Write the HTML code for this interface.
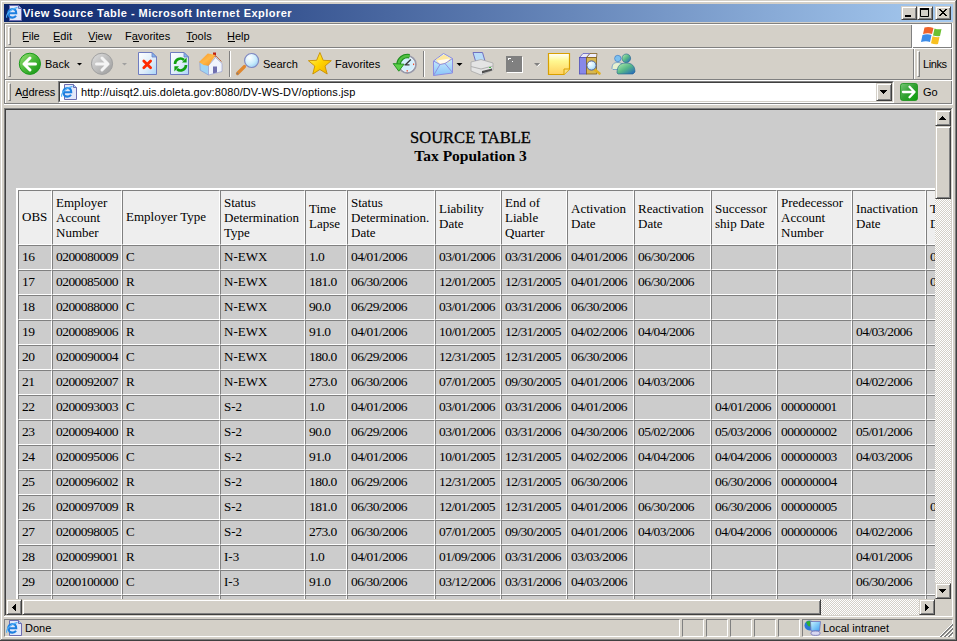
<!DOCTYPE html>
<html><head><meta charset="utf-8"><style>
*{box-sizing:border-box;margin:0;padding:0}
html,body{width:957px;height:641px;overflow:hidden;background:#d4d0c8;font-family:"Liberation Sans",sans-serif;font-size:11px;color:#000}
.a{position:absolute}
.hl{background:#fff}
.sh{background:#808080}
.dk{background:#404040}
.t{position:absolute;white-space:nowrap;line-height:12px;font-size:11px}
u{text-decoration:none;border-bottom:1px solid #000}
.grip{position:absolute;width:3px;border-left:1px solid #fff;border-top:1px solid #fff;border-right:1px solid #808080;border-bottom:1px solid #808080}
.btn{position:absolute;background:#d4d0c8;border-top:1px solid #d4d0c8;border-left:1px solid #d4d0c8;border-right:1px solid #404040;border-bottom:1px solid #404040;box-shadow:inset 1px 1px 0 #fff,inset -1px -1px 0 #808080}
.track{background-color:#ebe9e4;background-image:conic-gradient(#fff 25%,#d4d0c8 0 50%,#fff 0 75%,#d4d0c8 0);background-size:2px 2px}

#page{font-family:"Liberation Serif",serif}
#h1{position:absolute;left:0;width:929px;text-align:center;top:20px;font-size:16.5px;line-height:16px;white-space:nowrap;-webkit-text-stroke:0.3px #000}
#h2{position:absolute;left:0;width:929px;text-align:center;top:38px;font-size:15.5px;line-height:15px;font-weight:bold;white-space:nowrap}
#tb{position:absolute;left:10px;top:78px;border-collapse:separate;border-spacing:0;table-layout:fixed;border-top:2px solid #fff;border-left:2px solid #fff;font-size:13px;line-height:15px}
#tb th,#tb td{border-top:1px solid #808080;border-left:1px solid #808080;border-right:1px solid #fff;border-bottom:1px solid #fff;padding:0 0 0 3px;text-align:left;font-weight:normal;vertical-align:middle;white-space:nowrap;overflow:hidden}
#tb th{background:#eeeeee;height:55px;vertical-align:top;padding-top:18px}
#tb th.l2{padding-top:10px}
#tb th.l3{padding-top:3.5px}
#tb td{height:25px;padding-bottom:2px}
#tb td.n{letter-spacing:-0.55px;font-size:13.5px}
</style></head><body>
<!-- window frame -->
<div class="a hl" style="left:1px;top:1px;width:955px;height:1px"></div>
<div class="a hl" style="left:1px;top:1px;width:1px;height:639px"></div>
<div class="a sh" style="left:955px;top:1px;width:1px;height:639px"></div>
<div class="a sh" style="left:1px;top:639px;width:955px;height:1px"></div>
<div class="a dk" style="left:956px;top:0;width:1px;height:641px"></div>
<div class="a dk" style="left:0;top:640px;width:957px;height:1px"></div>

<!-- title bar -->
<div class="a" style="left:4px;top:4px;width:949px;height:18px;background:linear-gradient(to right,#0a246a,#a6caf0)"></div>
<div class="t" style="left:23px;top:7px;color:#fff;font-weight:bold;letter-spacing:0.48px">View Source Table - Microsoft Internet Explorer</div>
<div class="btn" style="left:901px;top:6px;width:16px;height:14px"></div>
<div class="btn" style="left:917px;top:6px;width:16px;height:14px"></div>
<div class="btn" style="left:935px;top:6px;width:16px;height:14px"></div>

<!-- rebar etched frame -->
<div class="a dk" style="left:4px;top:23px;width:948px;height:1px;background:#808080"></div>
<div class="a hl" style="left:5px;top:24px;width:947px;height:1px"></div>
<div class="a" style="left:4px;top:23px;width:1px;height:81px;background:#808080"></div>
<div class="a hl" style="left:5px;top:24px;width:1px;height:80px"></div>
<div class="a" style="left:951px;top:23px;width:1px;height:81px;background:#808080"></div>
<div class="a hl" style="left:952px;top:23px;width:1px;height:82px"></div>
<div class="a" style="left:4px;top:47px;width:948px;height:1px;background:#808080"></div>
<div class="a hl" style="left:5px;top:48px;width:947px;height:1px"></div>
<div class="a" style="left:4px;top:79px;width:948px;height:1px;background:#808080"></div>
<div class="a hl" style="left:5px;top:80px;width:947px;height:1px"></div>
<div class="a" style="left:4px;top:103px;width:948px;height:1px;background:#808080"></div>
<div class="a hl" style="left:4px;top:104px;width:949px;height:1px"></div>

<!-- menu band -->
<div class="grip" style="left:8px;top:27px;height:18px"></div>
<div class="t" style="left:22px;top:30px">File</div>
<div class="t" style="left:53px;top:30px">Edit</div>
<div class="t" style="left:88px;top:30px">View</div>
<div class="t" style="left:125px;top:30px">Favorites</div>
<div class="t" style="left:186px;top:30px">Tools</div>
<div class="t" style="left:227px;top:30px">Help</div>
<div class="a" style="left:911px;top:25px;width:1px;height:22px;background:#808080"></div>
<div class="a hl" style="left:912px;top:47px;width:1px;height:1px"></div>
<div class="a hl" style="left:912px;top:25px;width:39px;height:22px"></div>

<!-- toolbar band -->
<div class="grip" style="left:8px;top:51px;height:26px"></div>
<div class="t" style="left:45px;top:58px">Back</div>
<div class="t" style="left:263px;top:58px">Search</div>
<div class="t" style="left:335px;top:58px">Favorites</div>
<div class="a" style="left:229px;top:51px;width:1px;height:26px;background:#808080"></div>
<div class="a hl" style="left:230px;top:51px;width:1px;height:26px"></div>
<div class="a" style="left:423px;top:51px;width:1px;height:26px;background:#808080"></div>
<div class="a hl" style="left:424px;top:51px;width:1px;height:26px"></div>
<div class="a" style="left:913px;top:49px;width:1px;height:30px;background:#808080"></div>
<div class="a hl" style="left:914px;top:49px;width:1px;height:30px"></div>
<div class="grip" style="left:917px;top:51px;height:26px"></div>
<div class="t" style="left:923px;top:58px;letter-spacing:-0.4px">Links</div>

<!-- address band -->
<div class="grip" style="left:8px;top:83px;height:18px"></div>
<div class="t" style="left:15px;top:86px">Address</div>
<div class="a" style="left:58px;top:81px;width:836px;height:22px;border-top:1px solid #808080;border-left:1px solid #808080;border-right:1px solid #fff;border-bottom:1px solid #fff"></div>
<div class="a" style="left:59px;top:82px;width:834px;height:20px;border-top:1px solid #404040;border-left:1px solid #404040;border-right:1px solid #d4d0c8;border-bottom:1px solid #d4d0c8;background:#fff"></div>
<div class="t" style="left:81px;top:86px;letter-spacing:0.1px">http://uisqt2.uis.doleta.gov:8080/DV-WS-DV/options.jsp</div>
<div class="btn" style="left:876px;top:83px;width:16px;height:18px"></div>
<div class="t" style="left:923px;top:86px">Go</div>

<!-- content frame -->
<div class="a" style="left:4px;top:108px;width:948px;height:1px;background:#808080"></div>
<div class="a" style="left:4px;top:108px;width:1px;height:508px;background:#808080"></div>
<div class="a dk" style="left:5px;top:109px;width:946px;height:1px"></div>
<div class="a dk" style="left:5px;top:109px;width:1px;height:506px"></div>
<div class="a hl" style="left:952px;top:108px;width:1px;height:508px"></div>
<div class="a hl" style="left:4px;top:616px;width:949px;height:1px"></div>

<!-- page -->
<div class="a" id="page" style="left:6px;top:110px;width:929px;height:489px;background:#cccccc;overflow:hidden">
<div id="h1">SOURCE TABLE</div>
<div id="h2">Tax Population 3</div>
<table id="tb" style="width:984px">
<colgroup><col style="width:34px"><col style="width:70px"><col style="width:98px"><col style="width:85px"><col style="width:42px"><col style="width:88px"><col style="width:66px"><col style="width:66px"><col style="width:67px"><col style="width:77px"><col style="width:66px"><col style="width:75px"><col style="width:74px"><col style="width:74px"></colgroup>
<tr class="hr"><th>OBS</th><th class="l3">Employer<br>Account<br>Number</th><th>Employer Type</th><th class="l3">Status<br>Determination<br>Type</th><th class="l2">Time<br>Lapse</th><th class="l3">Status<br>Determination.<br>Date</th><th class="l2">Liability<br>Date</th><th class="l3">End of<br>Liable<br>Quarter</th><th class="l2">Activation<br>Date</th><th class="l2">Reactivation<br>Date</th><th class="l2">Successor<br>ship Date</th><th class="l3">Predecessor<br>Account<br>Number</th><th class="l2">Inactivation<br>Date</th><th class="l2">Termination<br>Date</th></tr>
<tr><td class="n">16</td><td class="n">0200080009</td><td>C</td><td>N-EWX</td><td class="n">1.0</td><td class="n">04/01/2006</td><td class="n">03/01/2006</td><td class="n">03/31/2006</td><td class="n">04/01/2006</td><td class="n">06/30/2006</td><td>&nbsp;</td><td>&nbsp;</td><td>&nbsp;</td><td class="n">0</td></tr>
<tr><td class="n">17</td><td class="n">0200085000</td><td>R</td><td>N-EWX</td><td class="n">181.0</td><td class="n">06/30/2006</td><td class="n">12/01/2005</td><td class="n">12/31/2005</td><td class="n">04/01/2006</td><td class="n">06/30/2006</td><td>&nbsp;</td><td>&nbsp;</td><td>&nbsp;</td><td class="n">0</td></tr>
<tr><td class="n">18</td><td class="n">0200088000</td><td>C</td><td>N-EWX</td><td class="n">90.0</td><td class="n">06/29/2006</td><td class="n">03/01/2006</td><td class="n">03/31/2006</td><td class="n">06/30/2006</td><td>&nbsp;</td><td>&nbsp;</td><td>&nbsp;</td><td>&nbsp;</td><td>&nbsp;</td></tr>
<tr><td class="n">19</td><td class="n">0200089006</td><td>R</td><td>N-EWX</td><td class="n">91.0</td><td class="n">04/01/2006</td><td class="n">10/01/2005</td><td class="n">12/31/2005</td><td class="n">04/02/2006</td><td class="n">04/04/2006</td><td>&nbsp;</td><td>&nbsp;</td><td class="n">04/03/2006</td><td>&nbsp;</td></tr>
<tr><td class="n">20</td><td class="n">0200090004</td><td>C</td><td>N-EWX</td><td class="n">180.0</td><td class="n">06/29/2006</td><td class="n">12/31/2005</td><td class="n">12/31/2005</td><td class="n">06/30/2006</td><td>&nbsp;</td><td>&nbsp;</td><td>&nbsp;</td><td>&nbsp;</td><td>&nbsp;</td></tr>
<tr><td class="n">21</td><td class="n">0200092007</td><td>R</td><td>N-EWX</td><td class="n">273.0</td><td class="n">06/30/2006</td><td class="n">07/01/2005</td><td class="n">09/30/2005</td><td class="n">04/01/2006</td><td class="n">04/03/2006</td><td>&nbsp;</td><td>&nbsp;</td><td class="n">04/02/2006</td><td>&nbsp;</td></tr>
<tr><td class="n">22</td><td class="n">0200093003</td><td>C</td><td>S-2</td><td class="n">1.0</td><td class="n">04/01/2006</td><td class="n">03/01/2006</td><td class="n">03/31/2006</td><td class="n">04/01/2006</td><td>&nbsp;</td><td class="n">04/01/2006</td><td class="n">000000001</td><td>&nbsp;</td><td>&nbsp;</td></tr>
<tr><td class="n">23</td><td class="n">0200094000</td><td>R</td><td>S-2</td><td class="n">90.0</td><td class="n">06/29/2006</td><td class="n">03/01/2006</td><td class="n">03/31/2006</td><td class="n">04/30/2006</td><td class="n">05/02/2006</td><td class="n">05/03/2006</td><td class="n">000000002</td><td class="n">05/01/2006</td><td>&nbsp;</td></tr>
<tr><td class="n">24</td><td class="n">0200095006</td><td>C</td><td>S-2</td><td class="n">91.0</td><td class="n">04/01/2006</td><td class="n">10/01/2005</td><td class="n">12/31/2005</td><td class="n">04/02/2006</td><td class="n">04/04/2006</td><td class="n">04/04/2006</td><td class="n">000000003</td><td class="n">04/03/2006</td><td>&nbsp;</td></tr>
<tr><td class="n">25</td><td class="n">0200096002</td><td>R</td><td>S-2</td><td class="n">180.0</td><td class="n">06/29/2006</td><td class="n">12/31/2005</td><td class="n">12/31/2005</td><td class="n">06/30/2006</td><td>&nbsp;</td><td class="n">06/30/2006</td><td class="n">000000004</td><td>&nbsp;</td><td>&nbsp;</td></tr>
<tr><td class="n">26</td><td class="n">0200097009</td><td>R</td><td>S-2</td><td class="n">181.0</td><td class="n">06/30/2006</td><td class="n">12/01/2005</td><td class="n">12/31/2005</td><td class="n">04/01/2006</td><td class="n">06/30/2006</td><td class="n">06/30/2006</td><td class="n">000000005</td><td>&nbsp;</td><td class="n">0</td></tr>
<tr><td class="n">27</td><td class="n">0200098005</td><td>C</td><td>S-2</td><td class="n">273.0</td><td class="n">06/30/2006</td><td class="n">07/01/2005</td><td class="n">09/30/2005</td><td class="n">04/01/2006</td><td class="n">04/03/2006</td><td class="n">04/04/2006</td><td class="n">000000006</td><td class="n">04/02/2006</td><td>&nbsp;</td></tr>
<tr><td class="n">28</td><td class="n">0200099001</td><td>R</td><td>I-3</td><td class="n">1.0</td><td class="n">04/01/2006</td><td class="n">01/09/2006</td><td class="n">03/31/2006</td><td class="n">03/03/2006</td><td>&nbsp;</td><td>&nbsp;</td><td>&nbsp;</td><td class="n">04/01/2006</td><td>&nbsp;</td></tr>
<tr><td class="n">29</td><td class="n">0200100000</td><td>C</td><td>I-3</td><td class="n">91.0</td><td class="n">06/30/2006</td><td class="n">03/12/2006</td><td class="n">03/31/2006</td><td class="n">04/03/2006</td><td>&nbsp;</td><td>&nbsp;</td><td>&nbsp;</td><td class="n">06/30/2006</td><td>&nbsp;</td></tr>
<tr><td class="n">30</td><td class="n">0200101000</td><td>R</td><td>I-3</td><td class="n">1.0</td><td class="n">04/01/2006</td><td class="n">01/09/2006</td><td class="n">03/31/2006</td><td class="n">03/03/2006</td><td>&nbsp;</td><td>&nbsp;</td><td>&nbsp;</td><td>&nbsp;</td><td>&nbsp;</td></tr>
</table>
</div>

<!-- scrollbars -->
<div class="a track" style="left:935px;top:110px;width:16px;height:489px"></div>
<div class="btn" style="left:935px;top:110px;width:16px;height:16px"></div>
<div class="btn" style="left:935px;top:126px;width:16px;height:73px"></div>
<div class="btn" style="left:935px;top:583px;width:16px;height:16px"></div>
<div class="a track" style="left:6px;top:599px;width:929px;height:16px"></div>
<div class="btn" style="left:6px;top:599px;width:16px;height:16px"></div>
<div class="btn" style="left:22px;top:599px;width:799px;height:16px"></div>
<div class="btn" style="left:919px;top:599px;width:16px;height:16px"></div>
<div class="a" style="left:935px;top:599px;width:16px;height:16px;background:#d4d0c8"></div>

<!-- status bar -->
<div class="a" style="left:4px;top:619px;width:676px;height:18px;border-top:1px solid #808080;border-left:1px solid #808080;border-right:1px solid #fff;border-bottom:1px solid #fff"></div>
<div class="t" style="left:25px;top:622px">Done</div>
<!-- status panels -->
<div class="a" style="left:682px;top:619px;width:22px;height:18px;border-top:1px solid #808080;border-left:1px solid #808080;border-right:1px solid #fff;border-bottom:1px solid #fff"></div>
<div class="a" style="left:706px;top:619px;width:22px;height:18px;border-top:1px solid #808080;border-left:1px solid #808080;border-right:1px solid #fff;border-bottom:1px solid #fff"></div>
<div class="a" style="left:730px;top:619px;width:22px;height:18px;border-top:1px solid #808080;border-left:1px solid #808080;border-right:1px solid #fff;border-bottom:1px solid #fff"></div>
<div class="a" style="left:754px;top:619px;width:22px;height:18px;border-top:1px solid #808080;border-left:1px solid #808080;border-right:1px solid #fff;border-bottom:1px solid #fff"></div>
<div class="a" style="left:778px;top:619px;width:22px;height:18px;border-top:1px solid #808080;border-left:1px solid #808080;border-right:1px solid #fff;border-bottom:1px solid #fff"></div>
<div class="a" style="left:802px;top:619px;width:151px;height:18px;border-top:1px solid #808080;border-left:1px solid #808080;border-right:1px solid #fff;border-bottom:1px solid #fff"></div>
<div class="t" style="left:823px;top:622px">Local intranet</div>

<svg class="a" style="left:0;top:0" width="957" height="641" viewBox="0 0 957 641">
<defs>
<linearGradient id="gB" x1="0" y1="0" x2="1" y2="1"><stop offset="0" stop-color="#9ee27a"/><stop offset="0.5" stop-color="#48b838"/><stop offset="1" stop-color="#109010"/></linearGradient>
<linearGradient id="gF" x1="0" y1="0" x2="1" y2="1"><stop offset="0" stop-color="#e0e0e0"/><stop offset="1" stop-color="#9a9a9a"/></linearGradient>
<linearGradient id="gDoc" x1="0" y1="0" x2="1" y2="1"><stop offset="0" stop-color="#ffffff"/><stop offset="0.6" stop-color="#dcecfa"/><stop offset="1" stop-color="#a8d4f8"/></linearGradient>
<linearGradient id="gRoof" x1="0" y1="0" x2="1" y2="1"><stop offset="0" stop-color="#f89020"/><stop offset="0.5" stop-color="#ffb848"/><stop offset="1" stop-color="#f08818"/></linearGradient>
<radialGradient id="gLens" cx="0.35" cy="0.3" r="0.8"><stop offset="0" stop-color="#ffffff"/><stop offset="0.6" stop-color="#c8ecfc"/><stop offset="1" stop-color="#90c8f0"/></radialGradient>
<linearGradient id="gStar" x1="0" y1="0" x2="1" y2="1"><stop offset="0" stop-color="#fff27a"/><stop offset="0.5" stop-color="#ffd400"/><stop offset="1" stop-color="#f0a800"/></linearGradient>
<linearGradient id="gNote" x1="0" y1="0" x2="0" y2="1"><stop offset="0" stop-color="#ffffff"/><stop offset="0.35" stop-color="#fff890"/><stop offset="1" stop-color="#ffd060"/></linearGradient>
<linearGradient id="gEnv" x1="0" y1="0" x2="0" y2="1"><stop offset="0" stop-color="#e0f8ff"/><stop offset="1" stop-color="#88c4f8"/></linearGradient>
<linearGradient id="gGo" x1="0" y1="0" x2="1" y2="1"><stop offset="0" stop-color="#78c878"/><stop offset="0.5" stop-color="#30a030"/><stop offset="1" stop-color="#08a008"/></linearGradient>
<linearGradient id="gMsn" x1="0" y1="0" x2="1" y2="1"><stop offset="0" stop-color="#b8f0b0"/><stop offset="0.5" stop-color="#58b888"/><stop offset="1" stop-color="#2060c0"/></linearGradient>
<linearGradient id="gPc" x1="0" y1="0" x2="1" y2="1"><stop offset="0" stop-color="#c8f4ff"/><stop offset="1" stop-color="#3ca0f0"/></linearGradient>

</defs>

<!-- title icon -->
<g transform="translate(6 5)">
 <path d="M3.5 0.5H12.5L15.5 3.5V15.5H3.5Z" fill="#e2e8fa" stroke="#6c6cb0"/>
 <path d="M12.5 0.5V3.5H15.5" fill="#a8d0f8" stroke="#6c6cb0"/>
 <path d="M2.8 8.2H10.2C10.2 5.6 8.6 4 6.4 4C4 4 2.2 5.9 2.2 8.3C2.2 10.8 4 12.6 6.5 12.6C8.2 12.6 9.3 11.9 10 10.8" fill="none" stroke="#1e80e0" stroke-width="2.1"/>
 <path d="M0.8 12.8C-0.4 9.6 4 4.2 11.5 2.4" fill="none" stroke="#50b0f8" stroke-width="1.1"/>
</g>

<!-- title buttons glyphs -->
<rect x="905" y="15" width="6" height="2" fill="#000"/>
<path d="M920.5 8.5h8v8h-8z" fill="none" stroke="#000"/><rect x="920" y="8" width="9" height="2" fill="#000"/>
<g fill="#000"><rect x="939" y="9" width="2" height="1"/><rect x="945" y="9" width="2" height="1"/><rect x="940" y="10" width="2" height="1"/><rect x="944" y="10" width="2" height="1"/><rect x="941" y="11" width="4" height="1"/><rect x="942" y="12" width="2" height="1"/><rect x="941" y="13" width="4" height="1"/><rect x="940" y="14" width="2" height="1"/><rect x="944" y="14" width="2" height="1"/><rect x="939" y="15" width="2" height="1"/><rect x="945" y="15" width="2" height="1"/></g>

<!-- menu underlines -->
<rect x="23" y="41" width="6" height="1" fill="#000"/>
<rect x="54" y="41" width="6" height="1" fill="#000"/>
<rect x="89" y="41" width="7" height="1" fill="#000"/>
<rect x="133" y="41" width="6" height="1" fill="#000"/>
<rect x="187" y="41" width="7" height="1" fill="#000"/>
<rect x="228" y="41" width="7" height="1" fill="#000"/>
<rect x="22" y="97" width="6" height="1" fill="#000"/>

<!-- back -->
<circle cx="29.9" cy="63.8" r="10.6" fill="url(#gB)" stroke="#1a9a1a" stroke-width="1"/>
<path d="M24 64H35.5M24 64L30 58M24 64L30 70" stroke="#fff" stroke-width="3" stroke-linecap="round" stroke-linejoin="round" fill="none"/>
<path d="M77 63H82L79.5 65.5Z" fill="#000"/>
<!-- forward -->
<circle cx="102" cy="63.8" r="10.6" fill="url(#gF)" stroke="#a0a0a0" stroke-width="1"/>
<path d="M96.5 64H108M108 64L102 58M108 64L102 70" stroke="#f4f4f4" stroke-width="3" stroke-linecap="round" stroke-linejoin="round" fill="none"/>
<path d="M122 63H127L124.5 65.5Z" fill="#a0a0a0"/>

<!-- stop -->
<path d="M138.5 52.5H152L156.5 57V74.5H138.5Z" fill="url(#gDoc)" stroke="#6f7cc0"/>
<path d="M152 52.5V57H156.5Z" fill="#80b8f0" stroke="#6f7cc0" stroke-width="0.8"/>
<path d="M143.8 61L150.6 67.8M150.6 61L143.8 67.8" stroke="#ff2a00" stroke-width="2.8" stroke-linecap="round"/>
<!-- refresh -->
<path d="M170.5 52.5H184L188.5 57V74.5H170.5Z" fill="url(#gDoc)" stroke="#6f7cc0"/>
<path d="M184 52.5V57H188.5Z" fill="#80b8f0" stroke="#6f7cc0" stroke-width="0.8"/>
<path d="M175 64C175 59 181 57 184 60" stroke="#10a010" stroke-width="2.6" fill="none"/>
<path d="M182 62.6H186.6V57.5Z" fill="#10a010"/>
<path d="M186 65C186 70 180 72 177 69" stroke="#10a010" stroke-width="2.6" fill="none"/>
<path d="M179 66.3H174.4V71.5Z" fill="#10a010"/>

<!-- home -->
<rect x="213" y="52.5" width="3" height="4" fill="#c02010"/>
<path d="M199.8 62L208.5 65.5V75L200.2 70.2Z" fill="#a0d4f4" stroke="#8090d0" stroke-width="0.6"/>
<path d="M208.5 65.5L215.5 57.5L222 63.5V71.5L208.5 75Z" fill="#f0f4fc" stroke="#9098d0" stroke-width="0.6"/>
<path d="M213 66.5H217V72.5L213 73.5Z" fill="#7070b0"/>
<path d="M199 62L207.8 53.5L215.5 55L208.5 65.8L203.5 65Z" fill="url(#gRoof)"/>
<path d="M215 55L221.5 61.5" stroke="#c07050" stroke-width="1"/>

<!-- search -->
<path d="M237.5 73.5L244.5 66.5" stroke="#e08830" stroke-width="3.2" stroke-linecap="round"/>
<path d="M237 74L238 73" stroke="#808080" stroke-width="2"/>
<circle cx="251.6" cy="60.5" r="7" fill="url(#gLens)" stroke="#8088c0" stroke-width="1.2"/>

<!-- star -->
<path d="M319.9 52.5L323.2 60.3L331.3 60.7L325 66L327.2 74L319.9 69.5L312.8 74L314.8 66L308.4 60.7L316.6 60.3Z" fill="url(#gStar)" stroke="#c89000" stroke-width="0.9" stroke-linejoin="round"/>

<!-- history -->
<circle cx="407.3" cy="64.4" r="8.6" fill="#d4eefc" stroke="#9a9aaa" stroke-width="1.8"/>
<circle cx="407.3" cy="64.4" r="7.2" fill="none" stroke="#f4faff" stroke-width="0.8"/>
<path d="M405.5 64.8L410.8 59.5M404.5 64.8H409.5" stroke="#383838" stroke-width="1.3"/>
<rect x="413" y="63.5" width="1.2" height="1.6" fill="#f05030"/><rect x="406.6" y="70" width="1.2" height="1.6" fill="#f05030"/>
<path d="M409.5 56.2C403.5 55.2 399 58.8 398.5 64.5" stroke="#1c8c1c" stroke-width="4.6" fill="none"/>
<path d="M409.5 56.2C403.5 55.2 399 58.8 398.5 64.5" stroke="#50c040" stroke-width="2.4" fill="none"/>
<path d="M393.2 63.6L404 64.2L398.8 71.2Z" fill="#5cd048" stroke="#1c8c1c" stroke-width="0.9" stroke-linejoin="round"/>
<!-- mail -->
<path d="M433.5 61L443.5 53.5L452.5 58.5V73L433.5 75.5Z" fill="url(#gEnv)" stroke="#8c8ce0" stroke-width="1"/>
<path d="M436 59.5L444 54.5L451 58.5L449.5 62L441 64.5L437 62Z" fill="#ffe8a0"/>
<path d="M437 60.5L449.5 58.5L448 62L440 64Z" fill="#fffaf0"/>
<path d="M433.5 75.5L440 64.5L445 63.5L452.5 72.5M433.5 61L440 64.5M445 63.5L452.5 58.5" stroke="#9090e0" stroke-width="1" fill="none"/>
<path d="M456.5 63H462.5L459.5 66Z" fill="#000"/>

<!-- print -->
<path d="M473 52.5H482.5L485 61H475.5Z" fill="#b8dcf8" stroke="#7070c0" stroke-width="1"/>
<path d="M471 62L481 59.5L493 63V70L481 75L471 71Z" fill="#e4e4e4" stroke="#a8a8a8" stroke-width="0.8"/>
<path d="M471 66.5L481 69L493 66" stroke="#b0b0b0" stroke-width="1" fill="none"/>
<path d="M482 71L492 68.5V70.5L482 73.5Z" fill="#505050"/>
<rect x="489" y="67" width="2" height="1" fill="#40c040"/>

<!-- edit -->
<rect x="506" y="56" width="16" height="16" fill="#808080"/>
<rect x="522" y="57" width="1" height="16" fill="#fff"/><rect x="507" y="72" width="16" height="1" fill="#fff"/>
<rect x="508" y="58" width="3" height="1" fill="#fff"/><rect x="508" y="59" width="1" height="1" fill="#fff"/><rect x="512" y="61" width="1" height="1" fill="#fff"/>
<path d="M534 63H540L537 66Z" fill="#808080"/>
<path d="M537.5 66.5L540.5 63.5" stroke="#fff" stroke-width="1"/>

<!-- note -->
<path d="M548.5 53.5H569.5V69L564 74.5H548.5Z" fill="url(#gNote)" stroke="#d8a000" stroke-width="1.2"/>
<path d="M564 74.5V69H569.5" fill="#f8e080" stroke="#d8a000" stroke-width="1"/>

<!-- research -->
<path d="M579.5 57.5L583 53.5H590L586.5 57.5Z" fill="#e8e8f8" stroke="#6060c0" stroke-width="0.8"/>
<rect x="579.5" y="57.5" width="7" height="16.5" fill="#8888e8" stroke="#5050b8" stroke-width="0.8"/>
<path d="M586.5 57.5L590 53.5H597L596.5 57.5Z" fill="#eeeeff" stroke="#806020" stroke-width="0.8"/>
<rect x="586.5" y="57.5" width="10" height="16.5" fill="#d8b850" stroke="#806020" stroke-width="0.8"/>
<path d="M594 69L599.5 73.5" stroke="#e0b020" stroke-width="2.6" stroke-linecap="round"/>
<circle cx="591.5" cy="65.5" r="4.6" fill="url(#gLens)" stroke="#5060a0" stroke-width="1"/>

<!-- messenger -->
<circle cx="617.8" cy="58.5" r="3.2" fill="#7cc0f0" stroke="#3070c0" stroke-width="0.6"/>
<path d="M612 68.5C612 64 614 62.5 618 62.5C621 62.5 623 64 623.5 67L621 69.5H613Z" fill="#e8f0d0" stroke="#4080c0" stroke-width="0.6"/>
<circle cx="626.3" cy="58.3" r="4.3" fill="url(#gMsn)" stroke="#206090" stroke-width="0.6"/>
<path d="M617 73C617 66 620 63 626 63C632 63 635 66 635 72L633 74H618Z" fill="url(#gMsn)" stroke="#206090" stroke-width="0.6"/>

<!-- address icon -->
<g transform="translate(61 84)">
 <path d="M3.5 0.5H12.5L15.5 3.5V15.5H3.5Z" fill="#e2e8fa" stroke="#6c6cb0"/>
 <path d="M12.5 0.5V3.5H15.5" fill="#a8d0f8" stroke="#6c6cb0"/>
 <path d="M2.8 8.2H10.2C10.2 5.6 8.6 4 6.4 4C4 4 2.2 5.9 2.2 8.3C2.2 10.8 4 12.6 6.5 12.6C8.2 12.6 9.3 11.9 10 10.8" fill="none" stroke="#1e80e0" stroke-width="2.1"/>
 <path d="M0.8 12.8C-0.4 9.6 4 4.2 11.5 2.4" fill="none" stroke="#50b0f8" stroke-width="1.1"/>
</g>
<!-- address dropdown arrow -->
<g fill="#000"><rect x="880" y="90" width="7" height="1"/><rect x="881" y="91" width="5" height="1"/><rect x="882" y="92" width="3" height="1"/><rect x="883" y="93" width="1" height="1"/></g>
<!-- go -->
<rect x="900.5" y="83.5" width="17" height="17" rx="2.2" fill="url(#gGo)" stroke="#189018" stroke-width="0.8"/>
<path d="M903 92H914.5M914.5 92L909.5 86.8M914.5 92L909.5 97.2" stroke="#fff" stroke-width="2.3" stroke-linecap="round" stroke-linejoin="round" fill="none"/>

<!-- windows logo -->
<path d="M924.5 27.5C927 26.6 930.5 26.8 933.5 28L932 34C929.5 33 926.5 33 923 34Z" fill="#f0642a"/>
<path d="M934.5 28.5C937 29.4 939.5 29.6 941.5 29L940 36C938 36.5 935.5 36.2 933 35.4Z" fill="#6cc032"/>
<path d="M922.5 35C925.5 34 929 34 931.5 35L930 42C927.5 41 924.5 41 921 42Z" fill="#3c8ce8"/>
<path d="M932.5 36.2C935 37 937.8 37.4 939.5 37L938 44C936 44.5 933.5 44.2 931 43.3Z" fill="#f8c020"/>

<!-- scroll arrows -->
<g fill="#000"><rect x="942" y="116" width="1" height="1"/><rect x="941" y="117" width="3" height="1"/><rect x="940" y="118" width="5" height="1"/><rect x="939" y="119" width="7" height="1"/><rect x="939" y="589" width="7" height="1"/><rect x="940" y="590" width="5" height="1"/><rect x="941" y="591" width="3" height="1"/><rect x="942" y="592" width="1" height="1"/><rect x="12" y="607" width="1" height="1"/><rect x="13" y="606" width="1" height="3"/><rect x="14" y="605" width="1" height="5"/><rect x="15" y="604" width="1" height="7"/><rect x="928" y="607" width="1" height="1"/><rect x="927" y="606" width="1" height="3"/><rect x="926" y="605" width="1" height="5"/><rect x="925" y="604" width="1" height="7"/></g>

<!-- status icons -->
<g transform="translate(6 620)">
 <path d="M3.5 0.5H12.5L15.5 3.5V15.5H3.5Z" fill="#e2e8fa" stroke="#6c6cb0"/>
 <path d="M12.5 0.5V3.5H15.5" fill="#a8d0f8" stroke="#6c6cb0"/>
 <path d="M2.8 8.2H10.2C10.2 5.6 8.6 4 6.4 4C4 4 2.2 5.9 2.2 8.3C2.2 10.8 4 12.6 6.5 12.6C8.2 12.6 9.3 11.9 10 10.8" fill="none" stroke="#1e80e0" stroke-width="2.1"/>
 <path d="M0.8 12.8C-0.4 9.6 4 4.2 11.5 2.4" fill="none" stroke="#50b0f8" stroke-width="1.1"/>
</g>
<circle cx="809.5" cy="625.5" r="5" fill="#2a7ad8"/>
<path d="M806 622C808 620.5 811 620.5 813 622L812 627L808 626Z" fill="#30b030"/>
<path d="M810.5 621.5H820.5L819.5 631H811Z" fill="url(#gPc)" stroke="#7070b8" stroke-width="0.8"/>
<ellipse cx="815.5" cy="633.2" rx="4.6" ry="2.2" fill="#d8d8f0" stroke="#7070b8" stroke-width="0.8"/>

<!-- size grip -->
<g fill="#fff"><rect x="939" y="636" width="1" height="1"/><rect x="940" y="635" width="1" height="1"/><rect x="941" y="634" width="1" height="1"/><rect x="942" y="633" width="1" height="1"/><rect x="943" y="632" width="1" height="1"/><rect x="943" y="636" width="1" height="1"/><rect x="944" y="631" width="1" height="1"/><rect x="944" y="635" width="1" height="1"/><rect x="945" y="630" width="1" height="1"/><rect x="945" y="634" width="1" height="1"/><rect x="946" y="629" width="1" height="1"/><rect x="946" y="633" width="1" height="1"/><rect x="947" y="628" width="1" height="1"/><rect x="947" y="632" width="1" height="1"/><rect x="947" y="636" width="1" height="1"/><rect x="948" y="627" width="1" height="1"/><rect x="948" y="631" width="1" height="1"/><rect x="948" y="635" width="1" height="1"/><rect x="949" y="626" width="1" height="1"/><rect x="949" y="630" width="1" height="1"/><rect x="949" y="634" width="1" height="1"/><rect x="950" y="625" width="1" height="1"/><rect x="950" y="629" width="1" height="1"/><rect x="950" y="633" width="1" height="1"/><rect x="951" y="624" width="1" height="1"/><rect x="951" y="628" width="1" height="1"/><rect x="951" y="632" width="1" height="1"/><rect x="952" y="623" width="1" height="1"/><rect x="952" y="627" width="1" height="1"/><rect x="952" y="631" width="1" height="1"/></g><g fill="#808080"><rect x="940" y="636" width="1" height="1"/><rect x="941" y="635" width="1" height="1"/><rect x="941" y="636" width="1" height="1"/><rect x="942" y="634" width="1" height="1"/><rect x="942" y="635" width="1" height="1"/><rect x="943" y="633" width="1" height="1"/><rect x="943" y="634" width="1" height="1"/><rect x="944" y="632" width="1" height="1"/><rect x="944" y="633" width="1" height="1"/><rect x="944" y="636" width="1" height="1"/><rect x="945" y="631" width="1" height="1"/><rect x="945" y="632" width="1" height="1"/><rect x="945" y="635" width="1" height="1"/><rect x="945" y="636" width="1" height="1"/><rect x="946" y="630" width="1" height="1"/><rect x="946" y="631" width="1" height="1"/><rect x="946" y="634" width="1" height="1"/><rect x="946" y="635" width="1" height="1"/><rect x="947" y="629" width="1" height="1"/><rect x="947" y="630" width="1" height="1"/><rect x="947" y="633" width="1" height="1"/><rect x="947" y="634" width="1" height="1"/><rect x="948" y="628" width="1" height="1"/><rect x="948" y="629" width="1" height="1"/><rect x="948" y="632" width="1" height="1"/><rect x="948" y="633" width="1" height="1"/><rect x="948" y="636" width="1" height="1"/><rect x="949" y="627" width="1" height="1"/><rect x="949" y="628" width="1" height="1"/><rect x="949" y="631" width="1" height="1"/><rect x="949" y="632" width="1" height="1"/><rect x="949" y="635" width="1" height="1"/><rect x="949" y="636" width="1" height="1"/><rect x="950" y="626" width="1" height="1"/><rect x="950" y="627" width="1" height="1"/><rect x="950" y="630" width="1" height="1"/><rect x="950" y="631" width="1" height="1"/><rect x="950" y="634" width="1" height="1"/><rect x="950" y="635" width="1" height="1"/><rect x="951" y="625" width="1" height="1"/><rect x="951" y="626" width="1" height="1"/><rect x="951" y="629" width="1" height="1"/><rect x="951" y="630" width="1" height="1"/><rect x="951" y="633" width="1" height="1"/><rect x="951" y="634" width="1" height="1"/><rect x="952" y="624" width="1" height="1"/><rect x="952" y="625" width="1" height="1"/><rect x="952" y="628" width="1" height="1"/><rect x="952" y="629" width="1" height="1"/><rect x="952" y="632" width="1" height="1"/><rect x="952" y="633" width="1" height="1"/></g>
</svg>

</body></html>
